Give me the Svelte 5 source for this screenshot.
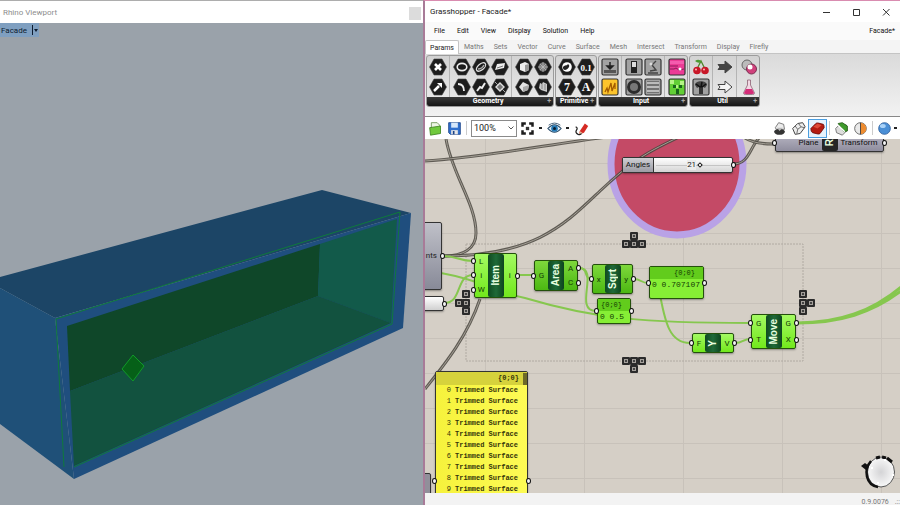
<script lang="ts">
  interface Tool {
    label: string;
    kind: 'hex' | 'tile' | 'free';
    icon: string;
  }

  interface Node {
    name: string;
    x: number;
    y: number;
    w: number;
    h: number;
    inputs: string[];
    outputs: string[];
    tone: 'bright' | 'green' | 'grey';
  }

  const menus = ['File', 'Edit', 'View', 'Display', 'Solution', 'Help'];
  const tabs = [
    'Params', 'Maths', 'Sets', 'Vector', 'Curve', 'Surface',
    'Mesh', 'Intersect', 'Transform', 'Display', 'Firefly'
  ];

  const hex = (label: string, icon: string): Tool => ({ label, kind: 'hex', icon });
  const tile = (label: string, icon: string): Tool => ({ label, kind: 'tile', icon });
  const free = (label: string, icon: string): Tool => ({ label, kind: 'free', icon });

  // each section is a block of columns, two tools high, listed row by row
  const groups: { name: string; sections: Tool[][] }[] = [
    {
      name: 'Geometry',
      sections: [
        [hex('Point', 'cross'), hex('Vector', 'arrow')],
        [
          hex('Circle', 'ring'), hex('Circular arc', 'orbit'), hex('Surface', 'sheet'),
          hex('Curve', 'bend'), hex('Line', 'line'), hex('Plane', 'plane')
        ],
        [hex('Brep', 'box'), hex('Mesh', 'mesh'), hex('Geometry', 'gem'), hex('Group', 'folds')]
      ]
    },
    {
      name: 'Primitive',
      sections: [[hex('Boolean', 'yin'), hex('Number', '0.1'), hex('Integer', '7'), hex('Text', 'A')]]
    },
    {
      name: 'Input',
      sections: [
        [tile('Slider', 'slider'), tile('Panel', 'notes')],
        [tile('Button', 'switch'), tile('Graph', 'graph'), tile('Knob', 'knob'), tile('List', 'rows')],
        [tile('Gradient', 'pink'), tile('Image', 'pixels')]
      ]
    },
    {
      name: 'Util',
      sections: [
        [free('Cherry picker', 'cherry'), tile('Tree', 'tree')],
        [free('Relay', 'relay'), free('Jump', 'jump')],
        [free('Cluster', 'cluster'), free('Flask', 'flask')]
      ]
    }
  ];

  const nodes: Node[] = [
    { name: 'Item', x: 49, y: 114, w: 43, h: 45, inputs: ['L', 'i', 'W'], outputs: ['i'], tone: 'bright' },
    { name: 'Area', x: 109, y: 121, w: 44, h: 31, inputs: ['G'], outputs: ['A', 'C'], tone: 'green' },
    { name: 'Sqrt', x: 167, y: 125, w: 41, h: 30, inputs: ['x'], outputs: ['y'], tone: 'green' },
    { name: 'Y', x: 267, y: 194, w: 42, h: 20, inputs: ['F'], outputs: ['V'], tone: 'bright' },
    { name: 'Move', x: 326, y: 175, w: 45, h: 35, inputs: ['G', 'T'], outputs: ['G', 'X'], tone: 'bright' },
    { name: 'R', x: 350, y: -6, w: 109, h: 19, inputs: ['Plane'], outputs: ['Transform'], tone: 'grey' }
  ];

  const panels = [
    { value: '0.5', x: 172, y: 159, w: 34, h: 26 },
    { value: '0.707107', x: 224, y: 127, w: 55, h: 33 }
  ];

  const wires = [
    'M21 0C27 35 51 65 51 94C51 110 38 117 18 117',
    'M18 117C110 117 140 85 175 52S225 12 254 -2',
    'M0 22C60 18 120 6 182 -2',
    'M308 25C324 25 324 10 334 -1',
    'M320 -1C328 4 338 5 348 5',
    'M55 160C42 198 20 225 0 250'
  ];

  const liveWires = [
    'M18 117C32 117 34 122 48 122',
    'M16 134C60 142 70 153 100 159C170 180 220 184 325 184',
    'M19 164C38 164 30 136 48 136',
    'M94 136H108',
    'M154 129C164 129 158 140 167 140',
    'M154 129C175 129 148 172 171 172',
    'M209 140C216 140 216 144 223 144',
    'M234 150C240 185 245 204 265 204',
    'M310 204C318 204 318 200 325 200'
  ];

  const keys = [
    [205, 93], [197, 101], [205, 101], [213, 101],
    [197, 218], [205, 218], [213, 218], [205, 226],
    [37, 151], [37, 160], [37, 168], [30, 160],
    [374, 151], [374, 160], [374, 168], [382, 160]
  ];

  const angleMax = 35;
  let angle = $state(21);
  let activeTab = $state('Params');
  let surfaces = Array.from({ length: 10 }, (_, i) => i);
</script>

{#snippet glyph(tool: Tool)}
  <svg viewBox="0 0 18 18" aria-hidden="true">
    {#if tool.kind === 'hex'}
      <path d="M5 1h8l4.500 8-4.500 8H5L.5 9z" fill="#1d1d1d" stroke="#444" stroke-width=".6" />
      {#if tool.icon === 'cross'}
        <path d="M6 6l6 6M12 6l-6 6" stroke="#fff" stroke-width="2.600" />
      {:else if tool.icon === 'arrow'}
        <path d="M5 13l5-5" stroke="#fff" stroke-width="2.500" /><path d="M8 5h5v5z" fill="#fff" />
      {:else if tool.icon === 'ring'}
        <ellipse cx="9" cy="9" rx="4.800" ry="3.600" fill="none" stroke="#eee" stroke-width="1.600" />
      {:else if tool.icon === 'orbit'}
        <ellipse cx="9" cy="9" rx="5.500" ry="3" transform="rotate(-40 9 9)" fill="none" stroke="#ddd" stroke-width="1.300" />
        <path d="M6 11c3 0 5-2 6-4" stroke="#aaa" stroke-width="1.500" fill="none" />
      {:else if tool.icon === 'sheet'}
        <path d="M4 12l2-6 8-1-1 5z" fill="#eee" /><path d="M6 10l6-2" stroke="#777" />
      {:else if tool.icon === 'bend'}
        <path d="M5 6c4 0 6 2 6 7" stroke="#eee" fill="none" stroke-width="1.800" />
      {:else if tool.icon === 'line'}
        <path d="M5 13l3-4 2 1 3-5" stroke="#eee" fill="none" stroke-width="2" />
      {:else if tool.icon === 'plane'}
        <path d="M9 5l4 4-4 4-4-4z" fill="#777" stroke="#ddd" stroke-width="1.400" /><path d="M4 4l3 3M14 14l-3-3" stroke="#aaa" />
      {:else if tool.icon === 'box'}
        <path d="M5 6l5-2 4 2v6l-4 2-5-2z" fill="#eee" /><path d="M10 7v7l4-2V6z" fill="#999" />
      {:else if tool.icon === 'mesh'}
        <circle cx="9" cy="9" r="4.500" fill="#777" /><path d="M9 4v10M4 9h10M6 6l6 6M12 6l-6 6" stroke="#bbb" stroke-width=".8" />
      {:else if tool.icon === 'gem'}
        <path d="M4 9l4-5 6 3-1 5-5 2z" fill="#e4e4e4" /><path d="M8 9l6-2-1 5-5 2z" fill="#aaa" />
      {:else if tool.icon === 'folds'}
        <path d="M6 5l2 1 1-2 2 1 2 1v8l-3-1-3-1-2-2z" fill="#ccc" /><path d="M8 6v5M11 6v6" stroke="#888" />
      {:else if tool.icon === 'yin'}
        <circle cx="9" cy="9" r="4.800" fill="#fff" /><path d="M5 10c0-3 3-2 4-3 1-2 3 0 2 2s-3 3-4 3-2-1-2-2z" fill="#222" />
      {:else}
        <text x="9" y="13" text-anchor="middle" class:small={tool.icon === '0.1'}>{tool.icon}</text>
      {/if}
    {:else if tool.kind === 'tile'}
      <rect
        x="1" y="1" width="16" height="16" rx="1.500" stroke="#333" stroke-width="1.200"
        fill={tool.icon === 'notes' ? '#fcc42c' : tool.icon === 'pink' ? '#ec3c96' : tool.icon === 'pixels' ? '#62cf35' : '#a2a2a2'}
      />
      {#if tool.icon === 'slider'}
        <path d="M3 12h12v3H3z" fill="#555" /><path d="M9 4v5M6 8h6l-3 3z" fill="#222" stroke="#222" stroke-width="1.500" />
      {:else if tool.icon === 'notes'}
        <path d="M4 14l2-4 1 4 3-9 1 8 3-8v6" stroke="#a45c00" stroke-width="1.300" fill="none" />
      {:else if tool.icon === 'switch'}
        <rect x="6" y="3" width="6" height="12" fill="#222" /><rect x="7" y="4" width="4" height="5" fill="#ddd" />
      {:else if tool.icon === 'graph'}
        <path d="M4 15h10M6 13l6-1-4-5 4-4" stroke="#444" stroke-width="1.400" fill="none" /><circle cx="7" cy="6" r="1.500" fill="#ddd" />
      {:else if tool.icon === 'knob'}
        <circle cx="9" cy="9" r="7" fill="#2c2c2c" /><circle cx="9" cy="9" r="4" fill="#777" />
      {:else if tool.icon === 'rows'}
        <path d="M3 5h12M3 9h12M3 13h12" stroke="#444" stroke-width="3" /><path d="M3 5h12M3 9h12M3 13h12" stroke="#e4e4e4" stroke-width="1.600" />
      {:else if tool.icon === 'pink'}
        <path d="M2 3h14v3H2z" fill="#f45cae" /><path d="M2 11h4l2-1 3 2 5-1M2 8h8" stroke="#8a1a58" fill="none" /><circle cx="12" cy="11" r="1.500" fill="#fff" />
      {:else if tool.icon === 'pixels'}
        <path d="M2 2h4v4H2zM12 3h4v4h-4zM7 7h3v3H7z" fill="#b5f486" /><path d="M5 7h3v3H5zM11 7h3v3h-3zM8 11h3v5H8z" fill="#17641a" />
      {:else if tool.icon === 'tree'}
        <path d="M3 7c0-5 12-5 12 0l-2 3-2-1-2 1-2-1-2 1z" fill="#444" /><path d="M8 16V9L4 6M9 9l1-5M10 16V9l4-3" stroke="#111" stroke-width="1.500" fill="none" />
      {/if}
    {:else if tool.icon === 'cherry'}
      <path d="M5 11L9 3l4 8" stroke="#50882c" stroke-width="1.300" fill="none" /><path d="M3 3q4-3 7 1-4 2-7-1z" fill="#4c9a30" />
      <circle cx="5" cy="12.500" r="3.800" fill="#c81828" /><circle cx="13" cy="12.500" r="3.800" fill="#c81828" /><circle cx="4" cy="11.500" r="1" fill="#fbb" /><circle cx="12" cy="11.500" r="1" fill="#fbb" />
    {:else if tool.icon === 'relay' || tool.icon === 'jump'}
      <path d="M2 6.500h7V3l7 6-7 6v-3.500H2l2-2.500z" fill={tool.icon === 'relay' ? '#444' : '#f6f6f6'} stroke="#444" />
    {:else if tool.icon === 'cluster'}
      <circle cx="7" cy="7" r="5" fill="#bbb" stroke="#666" /><circle cx="11.500" cy="11" r="5" fill="#d0417c" stroke="#7a3050" /><circle cx="10" cy="9" r="2.500" fill="#fff" />
    {:else if tool.icon === 'flask'}
      <path d="M7.500 2h3v5l4 8q0 1.500-2 1.500h-7q-2 0-2-1.500l4-8z" fill="#f3d8e4" stroke="#8c6274" stroke-width=".8" /><path d="M6 11h6l2 4q0 1-2 1H6q-2 0-2-1z" fill="#d42d78" />
    {/if}
  </svg>
{/snippet}

<div class="desktop">
  <section class="rhino">
    <header class="rhino-title">
      <span>Rhino Viewport</span>
      <button class="stub" aria-label="Close viewport"></button>
    </header>
    <div class="viewport">
      <button class="view-label">Facade <i></i><b></b></button>
      <svg class="scene" viewBox="0 23 423 481" preserveAspectRatio="xMinYMin meet" role="img" aria-label="Perspective view of the facade box">
        <path d="M0 277L322 190L411 213L55 318L0 288z" fill="#1c4566" />
        <path d="M0 288L55 318L74 479L0 424z" fill="#1f5078" />
        <path d="M55 318L411 213L403 328L74 479z" fill="#1f4e7e" />
        <path d="M67 326L320 244L318 296L70 391z" fill="#0f4729" />
        <path d="M320 244L397 219L391 323L318 296z" fill="#125a4a" />
        <path d="M70 391L318 296L391 323L74 466z" fill="#12523f" />
        <path d="M64 467L56 319L400 212L392 324L74 467" fill="none" stroke="#0f7a3c" />
        <path d="M133 355L144 366L133 381L122 369z" fill="#066018" stroke="#109a28" />
      </svg>
    </div>
  </section>

  <main class="gh">
    <header class="gh-title">
      <span>Grasshopper - Facade*</span>
      <div class="win">
        <button aria-label="Minimize"><svg viewBox="0 0 8 8"><path d="M1 4.500h7" /></svg></button>
        <button aria-label="Maximize"><svg viewBox="0 0 8 8"><path d="M1.500 1.500h6v6h-6z" /></svg></button>
        <button aria-label="Close"><svg viewBox="0 0 8 8"><path d="M1 1l6.500 6.500M7.500 1L1 7.500" /></svg></button>
      </div>
    </header>

    <nav class="menu">
      {#each menus as item}
        <button>{item}</button>
      {/each}
      <span class="doc">Facade*</span>
    </nav>

    <div class="tabs" role="tablist">
      {#each tabs as tab}
        <button role="tab" aria-selected={tab === activeTab} class:active={tab === activeTab} onclick={() => (activeTab = tab)}>{tab}</button>
      {/each}
    </div>

    <div class="ribbon">
      {#each groups as group}
        <div class="group">
          <div class="sections">
            {#each group.sections as section}
              <div class="section" class:wide={section.length > 4} class:pair={section.length === 4}>
                {#each section as tool}
                  <button aria-label={tool.label}>{@render glyph(tool)}</button>
                {/each}
              </div>
            {/each}
          </div>
          <div class="caption"><span>{group.name}</span><em>+</em></div>
        </div>
      {/each}
    </div>

    <div class="toolbar">
      <button aria-label="Open"><svg viewBox="0 0 18 18"><path d="M4 2h7l3 3v8H4z" fill="#eef6e6" stroke="#67904d" /><path d="M2 8l13-2v9l-12 2z" fill="#70c93c" stroke="#3e8420" /></svg></button>
      <button aria-label="Save"><svg viewBox="0 0 18 18"><path d="M2 2h14v14H4l-2-2z" fill="#2f6fcd" stroke="#1a4388" /><path d="M5 2h8v6H5z" fill="#d5e7fa" /><path d="M5 11h8v5H5z" fill="#e6e6e6" /><path d="M7 12h2v4H7z" fill="#1a4388" /></svg></button>
      <span class="rule"></span>
      <label class="zoom">
        <select aria-label="Zoom">
          <option>100%</option>
          <option>50%</option>
          <option>200%</option>
        </select>
        <svg viewBox="0 0 6 6"><path d="M.5 1.500L3 4l2.500-2.500" fill="none" stroke="#555" /></svg>
      </label>
      <button aria-label="Zoom extents"><svg viewBox="0 0 18 18"><path d="M3 7V3h4M11 3h4v4M15 11v4h-4M7 15H3v-4" fill="none" stroke="#1c1c1c" stroke-width="3" /><path d="M7 7h4v4H7z" fill="#333" /></svg></button>
      <span class="caret"></span>
      <button aria-label="Named views"><svg viewBox="0 0 18 18"><path d="M1 9q8-9 16 0-8 9-16 0z" fill="#dceaf4" stroke="#284a68" stroke-width="1.300" /><circle cx="9" cy="9" r="4" fill="#2378b4" /><circle cx="9" cy="9" r="1.800" fill="#0a1c2c" /><path d="M2 5q7-5 14 0" fill="none" stroke="#284a68" /></svg></button>
      <span class="caret"></span>
      <button aria-label="Sketch"><svg viewBox="0 0 18 18"><path d="M7 12l6-9 4 3-5 8-6 2z" fill="#d52b24" /><path d="M6 16l1-4 4 3z" fill="#e7b89c" /><path d="M2 7q3 1 1 4t2 5q3 1 4-1" fill="none" stroke="#222" stroke-width="1.500" /></svg></button>
      <span class="spring"></span>
      <button aria-label="No preview"><svg viewBox="0 0 18 18"><path d="M4 8l4-6 6 2 1 6H5z" fill="#ececec" stroke="#666" /><ellipse cx="9" cy="13" rx="6.500" ry="3.500" fill="#333" /><path d="M6 8h7l-4 4z" fill="#bbb" /></svg></button>
      <button aria-label="Wireframe preview"><svg viewBox="0 0 18 18"><path d="M2 9l6-6 6-1 3 5-6 8-6 1z" fill="#eee" stroke="#444" stroke-width="1.200" /><path d="M5 6l3 4-1 5M9 3l3 4 4 1M8 10l4-3" stroke="#555" fill="none" /></svg></button>
      <button class="on" aria-label="Shaded preview"><svg viewBox="0 0 18 18"><path d="M1 9l6-6q1-1 3-.5l6 1.500q1 1 1 4l-5 7q-1 1-3 .5l-6-1.500q-2-1-2-5z" fill="#b41a10" stroke="#6d0c08" /><path d="M4 7l5-4 5 2-5 4z" fill="#dd4a38" /></svg></button>
      <span class="rule"></span>
      <button aria-label="Preview selected"><svg viewBox="0 0 18 18"><path d="M2 9l6-6 7 2 1 6-6 6-7-3z" fill="#dedede" stroke="#666" /><path d="M5 3l5-1 6 4v6l-4 1z" fill="#3f9a2c" stroke="#235c16" /><path d="M5 5l8 8" stroke="#fff" stroke-width="1.600" /></svg></button>
      <button aria-label="Preview mesh"><svg viewBox="0 0 18 18"><circle cx="9" cy="9" r="7" fill="#e9e9e9" stroke="#555" /><path d="M9 2a7 7 0 0 1 0 14z" fill="#ee8c30" /><path d="M9 2v14" stroke="#333" /></svg></button>
      <span class="rule"></span>
      <button aria-label="Preview quality"><svg viewBox="0 0 18 18"><circle cx="9" cy="9" r="7" fill="#4a8fd6" stroke="#2a5c9a" /><ellipse cx="7" cy="6" rx="3.500" ry="2.500" fill="#a9d2f8" /></svg></button>
      <span class="caret"></span>
    </div>

    <div class="canvas">
      <svg class="wires" aria-hidden="true">
        <ellipse cx="252" cy="25" rx="66" ry="71" fill="#c44a66" stroke="#b9a2e6" stroke-width="7" />
        <rect x="41" y="105" width="337" height="117" fill="none" stroke="#b0aaa2" stroke-dasharray="2 1" />
        {#each wires as d}
          <path {d} class="wire" />
          <path {d} class="core" />
        {/each}
        {#each liveWires as d}
          <path {d} class="live" />
        {/each}
        <path d="M372 184C415 184 447 172 476 148M372 184C415 184 447 174 476 152" class="live thick" />
        {#each keys as [x, y]}
          <rect {x} {y} width="8" height="8" rx="1" fill="#2b2b2b" />
          <rect x={x + 2} y={y + 2} width="4" height="4" fill="#a5a19c" />
          <rect x={x + 3} y={y + 3} width="2" height="2" fill="#444" />
        {/each}
      </svg>

      <div class="stump points"><span>nts</span></div>
      <div class="stump value"></div>
      <div class="stump low"></div>

      {#each nodes as node}
        <div class="node {node.tone}" style="left: {node.x}px; top: {node.y}px; width: {node.w}px; height: {node.h}px;">
          <div class="ports in">
            {#each node.inputs as port}<span>{port}</span>{/each}
          </div>
          <div class="name"><span>{node.name}</span></div>
          <div class="ports out">
            {#each node.outputs as port}<span>{port}</span>{/each}
          </div>
        </div>
      {/each}

      {#each panels as panel}
        <div class="panel" style="left: {panel.x}px; top: {panel.y}px; width: {panel.w}px; height: {panel.h}px;">
          <div class="path">{'{0;0}'}</div>
          <div class="item">0 {panel.value}</div>
        </div>
      {/each}

      <div class="slider">
        <label for="angles">Angles</label>
        <div class="track">
          <input id="angles" type="range" min="0" max={angleMax} bind:value={angle} />
          <output for="angles" style="right: {100 - (angle / angleMax) * 100 + 6}%;">{angle}</output>
        </div>
      </div>

      <div class="list">
        <div class="list-path">{'{0;0}'}<i></i></div>
        <ol>
          {#each surfaces as i}
            <li><span>{i}</span>Trimmed Surface</li>
          {/each}
        </ol>
      </div>

      <svg class="compass" viewBox="0 0 38 38" aria-hidden="true">
        <defs>
          <radialGradient id="dial">
            <stop offset="0" stop-color="#d4d4d6" />
            <stop offset="1" stop-color="#f8f8f8" />
          </radialGradient>
        </defs>
        <ellipse cx="21" cy="19" rx="13.500" ry="15" fill="url(#dial)" stroke="#555" />
        <path d="M18 34C6 32 3 17 11 8" fill="none" stroke="#111" stroke-width="2.500" />
        <path d="M16 5l4-1M22 4l4 1M27 5l5 4" stroke="#111" stroke-width="3" />
        <path d="M1 13l4-3 4 3-3 4z" fill="#111" />
        <path d="M11 15h2M24 7h2M32 22h2M17 30h2" stroke="#fff" stroke-width="2" />
      </svg>
    </div>

    <footer class="status"><span>0.9.0076</span><span>.::</span></footer>
  </main>
</div>

<style>
  :global(body) {
    margin: 0;
  }

  .desktop {
    display: flex;
    height: 100vh;
    overflow: hidden;
    background: #a9a4ad;
    font-family: Roboto, 'Liberation Sans', sans-serif;
    font-size: 8px;
    color: #222;
  }

  button {
    border: 0;
    padding: 0;
    background: none;
    font: inherit;
    color: inherit;
  }

  svg {
    display: block;
  }

  .rhino {
    flex: 0 0 47%;
    display: flex;
    flex-direction: column;
    border-top: 1px solid #adadad;
    box-sizing: border-box;
  }

  .rhino-title {
    display: flex;
    align-items: center;
    justify-content: space-between;
    height: 22px;
    padding: 0 2px 0 3px;
    background: #fff;
    color: #8d8d8d;
  }

  .stub {
    width: 12px;
    height: 13px;
    margin-top: 3px;
    background: #dcdcdc;
  }

  .viewport {
    flex: 1;
    position: relative;
    min-height: 0;
    background: #9aa2aa;
  }

  .view-label {
    position: absolute;
    left: 0;
    top: 0;
    display: flex;
    align-items: center;
    gap: 1px;
    height: 14px;
    padding: 0 1px;
    background: #7f9fc0;
    color: #0d1c30;
  }

  .view-label i {
    width: 1px;
    height: 10px;
    margin-left: 4px;
    background: #0d1c30;
  }

  .view-label b {
    border: 2px solid transparent;
    border-top: 3px solid #0d1c30;
    border-bottom: 0;
  }

  .scene {
    width: 100%;
  }

  .gh {
    flex: 1;
    min-width: 0;
    display: flex;
    flex-direction: column;
    border-top: 1px solid #d98cb0;
    border-left: 2px solid #a87b98;
    background: #fff;
  }

  .gh-title {
    display: flex;
    align-items: center;
    justify-content: space-between;
    height: 21px;
    padding: 0 10px 0 5px;
  }

  .win {
    display: flex;
    gap: 22px;
  }

  .win svg {
    width: 8px;
    height: 8px;
    overflow: visible;
    fill: none;
    stroke: #333;
  }

  .menu {
    display: flex;
    align-items: center;
    gap: 12px;
    height: 18px;
    padding: 0 5px 0 9px;
    background: #fafafa;
    font-size: 7px;
    color: #111;
  }

  .doc {
    margin-left: auto;
  }

  .tabs {
    display: flex;
    height: 13px;
    background: #f4f4f4;
    border-bottom: 1px solid #c4c4c4;
    font-size: 7px;
    color: #777;
  }

  .tabs button {
    padding: 0 5px;
  }

  .tabs .active {
    margin-bottom: -1px;
    padding: 0 4px;
    border: 1px solid #c4c4c4;
    border-bottom: 0;
    border-radius: 2px 2px 0 0;
    background: #fff;
    color: #222;
  }

  .ribbon {
    display: flex;
    align-items: flex-start;
    gap: 1px;
    padding: 1px 0 9px 1px;
    background: linear-gradient(#dadada, #f2f2f2);
    border-bottom: 1px solid #888;
  }

  .group {
    border: 1px solid #9c9c9c;
    border-radius: 3px;
    background: linear-gradient(#d2d2d2, #ececec);
    overflow: hidden;
  }

  .sections {
    display: flex;
    padding: 0 1px;
  }

  .section {
    display: grid;
    grid-template-columns: 19px;
    grid-auto-rows: 20px;
    padding: 1px 0 0;
  }

  .section + .section {
    margin-left: 2px;
    padding-left: 2px;
    border-left: 1px solid #b4b4b4;
  }

  .section.pair {
    grid-template-columns: 19px 19px;
  }

  .section.wide {
    grid-template-columns: 19px 19px 19px;
  }

  .section button {
    display: grid;
    place-items: center;
  }

  .section svg {
    width: 18px;
    height: 18px;
  }

  .section text {
    fill: #fff;
    font: bold 12px 'Liberation Serif', serif;
  }

  .section text.small {
    font-size: 9px;
  }

  .caption {
    display: flex;
    align-items: center;
    height: 9px;
    padding: 0 2px;
    background: linear-gradient(#3a3a3a, #161616);
    color: #fff;
    font-size: 7px;
    font-weight: bold;
    line-height: 9px;
  }

  .caption span {
    flex: 1;
    text-align: center;
  }

  .caption em {
    font-style: normal;
    color: #aaa;
  }

  .toolbar {
    display: flex;
    align-items: center;
    height: 22px;
    padding: 0 1px;
    background: #fff;
  }

  .toolbar button {
    padding: 1px;
    border: 1px solid transparent;
  }

  .toolbar button.on {
    border-color: #4d9fe0;
    background: #e6f2fc;
  }

  .toolbar button svg {
    width: 15px;
    height: 15px;
  }

  .rule {
    width: 1px;
    height: 14px;
    margin: 0 2px;
    background: #ccc;
  }

  .caret {
    width: 3px;
    height: 2px;
    margin: 0 3px 0 2px;
    background: #222;
  }

  .caret:last-child {
    margin: 0 2px 0 0;
  }

  .spring {
    flex: 1;
  }

  .zoom {
    display: flex;
    align-items: center;
    height: 15px;
    margin: 0 1px 0 2px;
    padding-right: 2px;
    border: 1px solid #8a8a8a;
  }

  .zoom select {
    appearance: none;
    width: 36px;
    border: 0;
    padding: 0 0 0 2px;
    background: none;
    font: 9px Roboto, sans-serif;
    color: #222;
  }

  .zoom svg {
    width: 6px;
    height: 6px;
  }

  .canvas {
    flex: 1;
    position: relative;
    min-height: 0;
    overflow: hidden;
    background:
      linear-gradient(90deg, #c8c2ba 1px, transparent 1px) 60px 0 / 99px 100%,
      linear-gradient(#c8c2ba 1px, transparent 1px) 0 24px / 100% 35px,
      #d5cfc6;
  }

  .wires {
    position: absolute;
    inset: 0;
    width: 100%;
    height: 100%;
  }

  .wires path {
    fill: none;
  }

  .wire {
    stroke: #4a4740;
    stroke-width: 3;
    opacity: 0.85;
  }

  .core {
    stroke: #a39e94;
    stroke-width: 1;
  }

  .live {
    stroke: #86c74e;
    stroke-width: 2;
  }

  .live.thick {
    stroke-width: 3;
  }

  .node,
  .panel,
  .slider,
  .stump,
  .list {
    position: absolute;
    box-sizing: border-box;
    border: 1px solid #24500c;
    border-radius: 2px;
    box-shadow: 0 1px 2px rgba(0, 0, 0, 0.35);
  }

  .node {
    display: flex;
    color: #123c04;
  }

  .bright {
    background: linear-gradient(#a4fa62, #72e81c);
  }

  .green {
    background: linear-gradient(#7ed83c, #4cb812);
  }

  .grey {
    border-color: #333;
    background: linear-gradient(#b9b7c4, #8f8d9e);
    color: #111;
  }

  .ports {
    flex: 1;
    display: flex;
    flex-direction: column;
  }

  .ports span {
    flex: 1;
    position: relative;
    display: flex;
    align-items: center;
    justify-content: center;
  }

  .grey .in span {
    justify-content: flex-end;
    padding-right: 3px;
  }

  .grey .out span {
    justify-content: flex-start;
    padding-left: 3px;
  }

  .ports span::after,
  .panel::before,
  .panel::after,
  .slider::after,
  .stump::after,
  .list::before,
  .list::after {
    content: '';
    position: absolute;
    top: calc(50% - 3px);
    width: 3px;
    height: 4px;
    border: 1px solid #111;
    border-radius: 50%;
    background: #f4f4f4;
  }

  .in span::after,
  .panel::before,
  .list::before {
    left: -4px;
  }

  .out span::after,
  .panel::after,
  .slider::after,
  .stump::after,
  .list::after {
    right: -4px;
  }

  .name {
    width: 16px;
    display: flex;
    align-items: center;
    justify-content: center;
    border-radius: 2px;
    background: linear-gradient(90deg, #0f4a20, #1f6a38 50%, #0e451e);
    color: #e8ffe0;
    font: bold 10px/16px 'Liberation Sans', sans-serif;
  }

  .grey .name {
    background: #262626;
  }

  .name span {
    writing-mode: vertical-rl;
    transform: rotate(180deg);
  }

  .panel {
    background: #86ee35;
    color: #143c04;
    font: 8px/12px 'Liberation Mono', monospace;
    white-space: nowrap;
  }

  .path {
    padding-right: 8px;
    background: #62cc1c;
    font-size: 7px;
    text-align: right;
  }

  .item {
    padding-left: 2px;
  }

  .slider {
    left: 197px;
    top: 18px;
    display: flex;
    width: 111px;
    height: 16px;
    border-color: #333;
    background: linear-gradient(#fff, #d4d4d4);
  }

  .slider label {
    flex: 0 0 30px;
    background: linear-gradient(#cfcfd4, #9c9ca4);
    border-right: 1px solid #333;
    line-height: 14px;
    text-align: center;
    color: #111;
  }

  .track {
    flex: 1;
    position: relative;
    display: flex;
    align-items: center;
    min-width: 0;
  }

  .track input {
    appearance: none;
    flex: 1;
    min-width: 0;
    height: 1px;
    margin: 0 2px;
    background: #c4c4c4;
  }

  .track input::-webkit-slider-thumb {
    appearance: none;
    width: 4px;
    height: 4px;
    border: 1px solid #111;
    box-sizing: border-box;
    background: #fff;
    transform: rotate(45deg);
  }

  .track output {
    position: absolute;
    line-height: 10px;
    background: #ececec;
  }

  .stump {
    left: -3px;
    border-color: #333;
  }

  .points {
    top: 83px;
    width: 20px;
    height: 68px;
    padding: 28px 4px 0 0;
    background: linear-gradient(#bfc0c8, #888a98);
    text-align: right;
  }

  .value {
    top: 157px;
    width: 22px;
    height: 15px;
    background: linear-gradient(#fff, #d0d0d0);
  }

  .low {
    top: 334px;
    width: 9px;
    height: 24px;
    background: #918f9a;
  }

  .low::after {
    display: none;
  }

  .list {
    left: 10px;
    top: 232px;
    width: 93px;
    height: 220px;
    border-color: #333;
    background: linear-gradient(90deg, #f6f23c, #fdfb55);
    color: #35340a;
    font: bold 7px/11px 'Liberation Mono', monospace;
  }

  .list-path {
    position: relative;
    padding-right: 8px;
    background: #d6d23c;
    line-height: 13px;
    text-align: right;
  }

  .list-path i {
    position: absolute;
    right: 0;
    top: 1px;
    width: 4px;
    height: 12px;
    background: #6d6a28;
  }

  .list ol {
    margin: 0;
    padding: 0;
    list-style: none;
  }

  .list li {
    display: flex;
    gap: 4px;
    white-space: nowrap;
  }

  .list li span {
    width: 15px;
    text-align: right;
    font-weight: normal;
  }

  .compass {
    position: absolute;
    right: 2px;
    bottom: 2px;
    width: 38px;
    height: 38px;
  }

  .status {
    display: flex;
    justify-content: flex-end;
    gap: 6px;
    height: 8px;
    padding: 4px 0 0;
    overflow: hidden;
    background: #f3f3f3;
    color: #777;
    font-size: 7px;
    line-height: 10px;
  }
</style>
